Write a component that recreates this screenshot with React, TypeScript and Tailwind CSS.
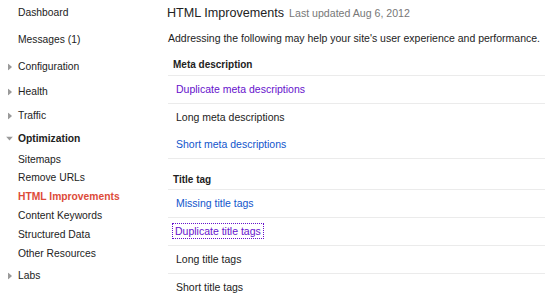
const font = { fontFamily: '"Liberation Sans", Arial, sans-serif' }

type NavItem = { label: string; arrow?: "right" | "down"; h: string; bold?: boolean }

const topNav: NavItem[] = [
  { label: "Dashboard", h: "h-[26px]" },
  { label: "Messages (1)", h: "h-[28px]" },
  { label: "Configuration", arrow: "right", h: "h-[26px]" },
  { label: "Health", arrow: "right", h: "h-[24px]" },
  { label: "Traffic", arrow: "right", h: "h-[24px]" },
  { label: "Optimization", arrow: "down", h: "h-[22px]", bold: true },
]

const subNav = [
  "Sitemaps",
  "Remove URLs",
  "HTML Improvements",
  "Content Keywords",
  "Structured Data",
  "Other Resources",
]

function Arrow({ dir }: { dir: "right" | "down" }) {
  if (dir === "down") {
    return (
      <svg width="7" height="5" viewBox="0 0 7 5" className="absolute left-[6px] top-1/2 -translate-y-1/2">
        <path d="M0 0 L7 0 L3.5 4 Z" fill="#9a9a9a" />
      </svg>
    )
  }
  return (
    <svg width="5" height="7" viewBox="0 0 5 7" className="absolute left-[8px] top-1/2 -translate-y-1/2">
      <path d="M0 0 L4 3.5 L0 7 Z" fill="#9a9a9a" />
    </svg>
  )
}

type Row = { label: string; color: "link" | "visited" | "plain"; border: boolean; focus?: boolean }

function IssueRow({ row }: { row: Row }) {
  const color =
    row.color === "link" ? "text-[#1155cc]" : row.color === "visited" ? "text-[#6611cc]" : "text-[#222222]"
  return (
    <div className={`flex h-[27px] items-center pl-[8px] ${row.border ? "box-content border-b border-[#ebebeb]" : ""}`}>
      {row.focus ? (
        <span className={`-ml-[3px] px-[2px] py-[1px] leading-[12px] outline-1 outline-dotted outline-[#6611cc] ${color}`}>
          {row.label}
        </span>
      ) : (
        <span className={color}>{row.label}</span>
      )}
    </div>
  )
}

const metaRows: Row[] = [
  { label: "Duplicate meta descriptions", color: "visited", border: true },
  { label: "Long meta descriptions", color: "plain", border: false },
  { label: "Short meta descriptions", color: "link", border: true },
]

const titleRows: Row[] = [
  { label: "Missing title tags", color: "link", border: true },
  { label: "Duplicate title tags", color: "visited", border: true, focus: true },
  { label: "Long title tags", color: "plain", border: true },
  { label: "Short title tags", color: "plain", border: false },
]

export default function App() {
  return (
    <div className="flex h-[299px] w-[545px] overflow-hidden bg-white text-[#222222]" style={font}>
      {/* Sidebar */}
      <div className="w-[168px] shrink-0 text-[10.3px]">
        {topNav.map((item) => (
          <div key={item.label} className={`relative flex items-center pl-[18px] ${item.h} ${item.bold ? "font-bold" : ""}`}>
            {item.arrow && <Arrow dir={item.arrow} />}
            {item.label}
          </div>
        ))}
        {subNav.map((label) => (
          <div
            key={label}
            className={`flex h-[18.8px] items-center pl-[18px] ${
              label === "HTML Improvements" ? "font-bold text-[#dd4b39]" : ""
            }`}
          >
            {label}
          </div>
        ))}
        <div className="relative flex h-[26px] items-center pl-[18px]">
          <Arrow dir="right" />
          Labs
        </div>
      </div>

      {/* Main */}
      <div className="min-w-0 flex-1 text-[10.5px]">
        <div className="flex items-baseline gap-[5px] pt-[5px]">
          <span className="-ml-[1px] text-[12.6px] leading-[16px] text-[#222222]">HTML Improvements</span>
          <span className="text-[10.6px] text-[#777777]">Last updated Aug 6, 2012</span>
        </div>
        <div className="mt-[9px] leading-[14px] whitespace-nowrap">
          Addressing the following may help your site's user experience and performance.
        </div>

        <div className="mt-[9px] flex h-[22px] items-end border-b border-[#ebebeb] pb-[3px] pl-[5px] font-bold text-[10px]">
          Meta description
        </div>
        {metaRows.map((r) => (
          <IssueRow key={r.label} row={r} />
        ))}

        <div className="flex h-[31px] items-end border-b border-[#ebebeb] pb-[2px] pl-[5px] font-bold text-[10px]">
          Title tag
        </div>
        {titleRows.map((r) => (
          <IssueRow key={r.label} row={r} />
        ))}
      </div>
    </div>
  )
}
